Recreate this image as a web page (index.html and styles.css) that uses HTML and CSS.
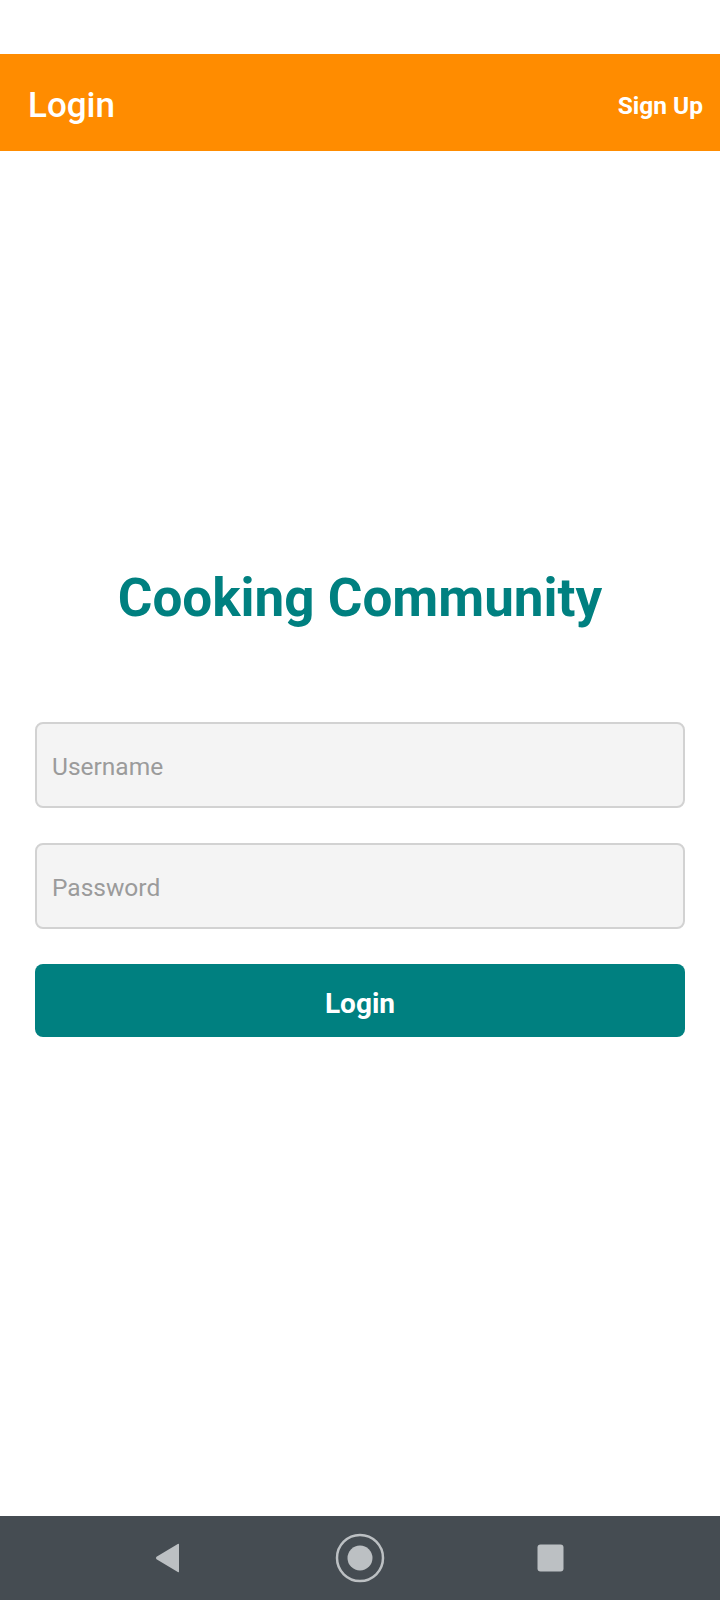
FILE: index.html
```html
<!DOCTYPE html>
<html lang="en">
<head>
<meta charset="utf-8">
<title>Login</title>
<link rel="stylesheet" href="styles.css">
</head>
<body>
<div class="screen">
  <div class="status-bar"></div>
  <header class="toolbar">
    <h1 class="toolbar-title">Login</h1>
    <a class="toolbar-action">Sign Up</a>
  </header>
  <main class="content">
    <h2 class="app-title">Cooking Community</h2>
    <form class="login-form">
      <input class="field" type="text" placeholder="Username">
      <input class="field" type="password" placeholder="Password">
      <button class="login-btn" type="button">Login</button>
    </form>
  </main>
  <nav class="nav-bar">
    <svg class="nav-icon" width="26" height="30" viewBox="0 0 26 30"><path d="M24 1.5 L24 28.5 Q24 29.8 22.8 29 L1.5 16.2 Q0.3 15 1.5 13.8 L22.8 1 Q24 0.2 24 1.5 Z" fill="#bcc0c3"/></svg>
    <svg class="nav-icon" width="50" height="50" viewBox="0 0 50 50"><circle cx="25" cy="25" r="23" fill="none" stroke="#bcc0c3" stroke-width="2.5"/><circle cx="25" cy="25" r="12.5" fill="#bcc0c3"/></svg>
    <svg class="nav-icon" width="27" height="28" viewBox="0 0 27 28"><rect x="0.5" y="0.5" width="26" height="27" rx="3" fill="#bcc0c3"/></svg>
  </nav>
</div>
</body>
</html>
```
FILE: styles.css
```css
* { box-sizing: border-box; }
html, body { margin: 0; padding: 0; }
body {
  font-family: Roboto, "Liberation Sans", Arial, sans-serif;
  background: #ffffff;
}
.screen {
  width: 720px;
  height: 1600px;
  display: flex;
  flex-direction: column;
}
.status-bar {
  height: 54px;
  background: #ffffff;
  flex: none;
}
.toolbar {
  height: 97px;
  flex: none;
  background: #ff8c00;
  display: flex;
  align-items: center;
  justify-content: space-between;
  padding: 5px 17px 0 28px;
}
.toolbar-title {
  margin: 0;
  color: #ffffff;
  font-size: 35px;
  font-weight: 500;
}
.toolbar-action {
  color: #ffffff;
  font-size: 24.5px;
  font-weight: 700;
}
.content {
  flex: 1;
  padding: 416px 35px 0 35px;
}
.app-title {
  margin: 0;
  text-align: center;
  color: #008080;
  font-size: 53px;
  font-weight: 700;
  line-height: normal;
}
.login-form {
  margin-top: 93px;
  display: flex;
  flex-direction: column;
}
.field {
  height: 86px;
  width: 100%;
  margin: 0 0 35px 0;
  padding: 2px 15px 0 15px;
  border: 2px solid #d2d2d2;
  border-radius: 8px;
  background: #f4f4f4;
  font-family: Roboto, "Liberation Sans", Arial, sans-serif;
  font-size: 24.5px;
  color: #333333;
  outline: none;
}
.field::placeholder { color: #9b9b9b; }
.login-btn {
  height: 73px;
  width: 100%;
  border: none;
  border-radius: 8px;
  background: #008080;
  color: #ffffff;
  font-family: Roboto, "Liberation Sans", Arial, sans-serif;
  font-size: 28px;
  font-weight: 700;
  padding: 5px 0 0 0;
}
.nav-bar {
  height: 84px;
  flex: none;
  background: #454c52;
  display: flex;
  align-items: center;
  justify-content: flex-start;
  padding-left: 155px;
}
.nav-icon { display: block; }
.nav-icon:nth-child(1) { margin-right: 154px; }
.nav-icon:nth-child(3) { margin-left: 152px; }
```
